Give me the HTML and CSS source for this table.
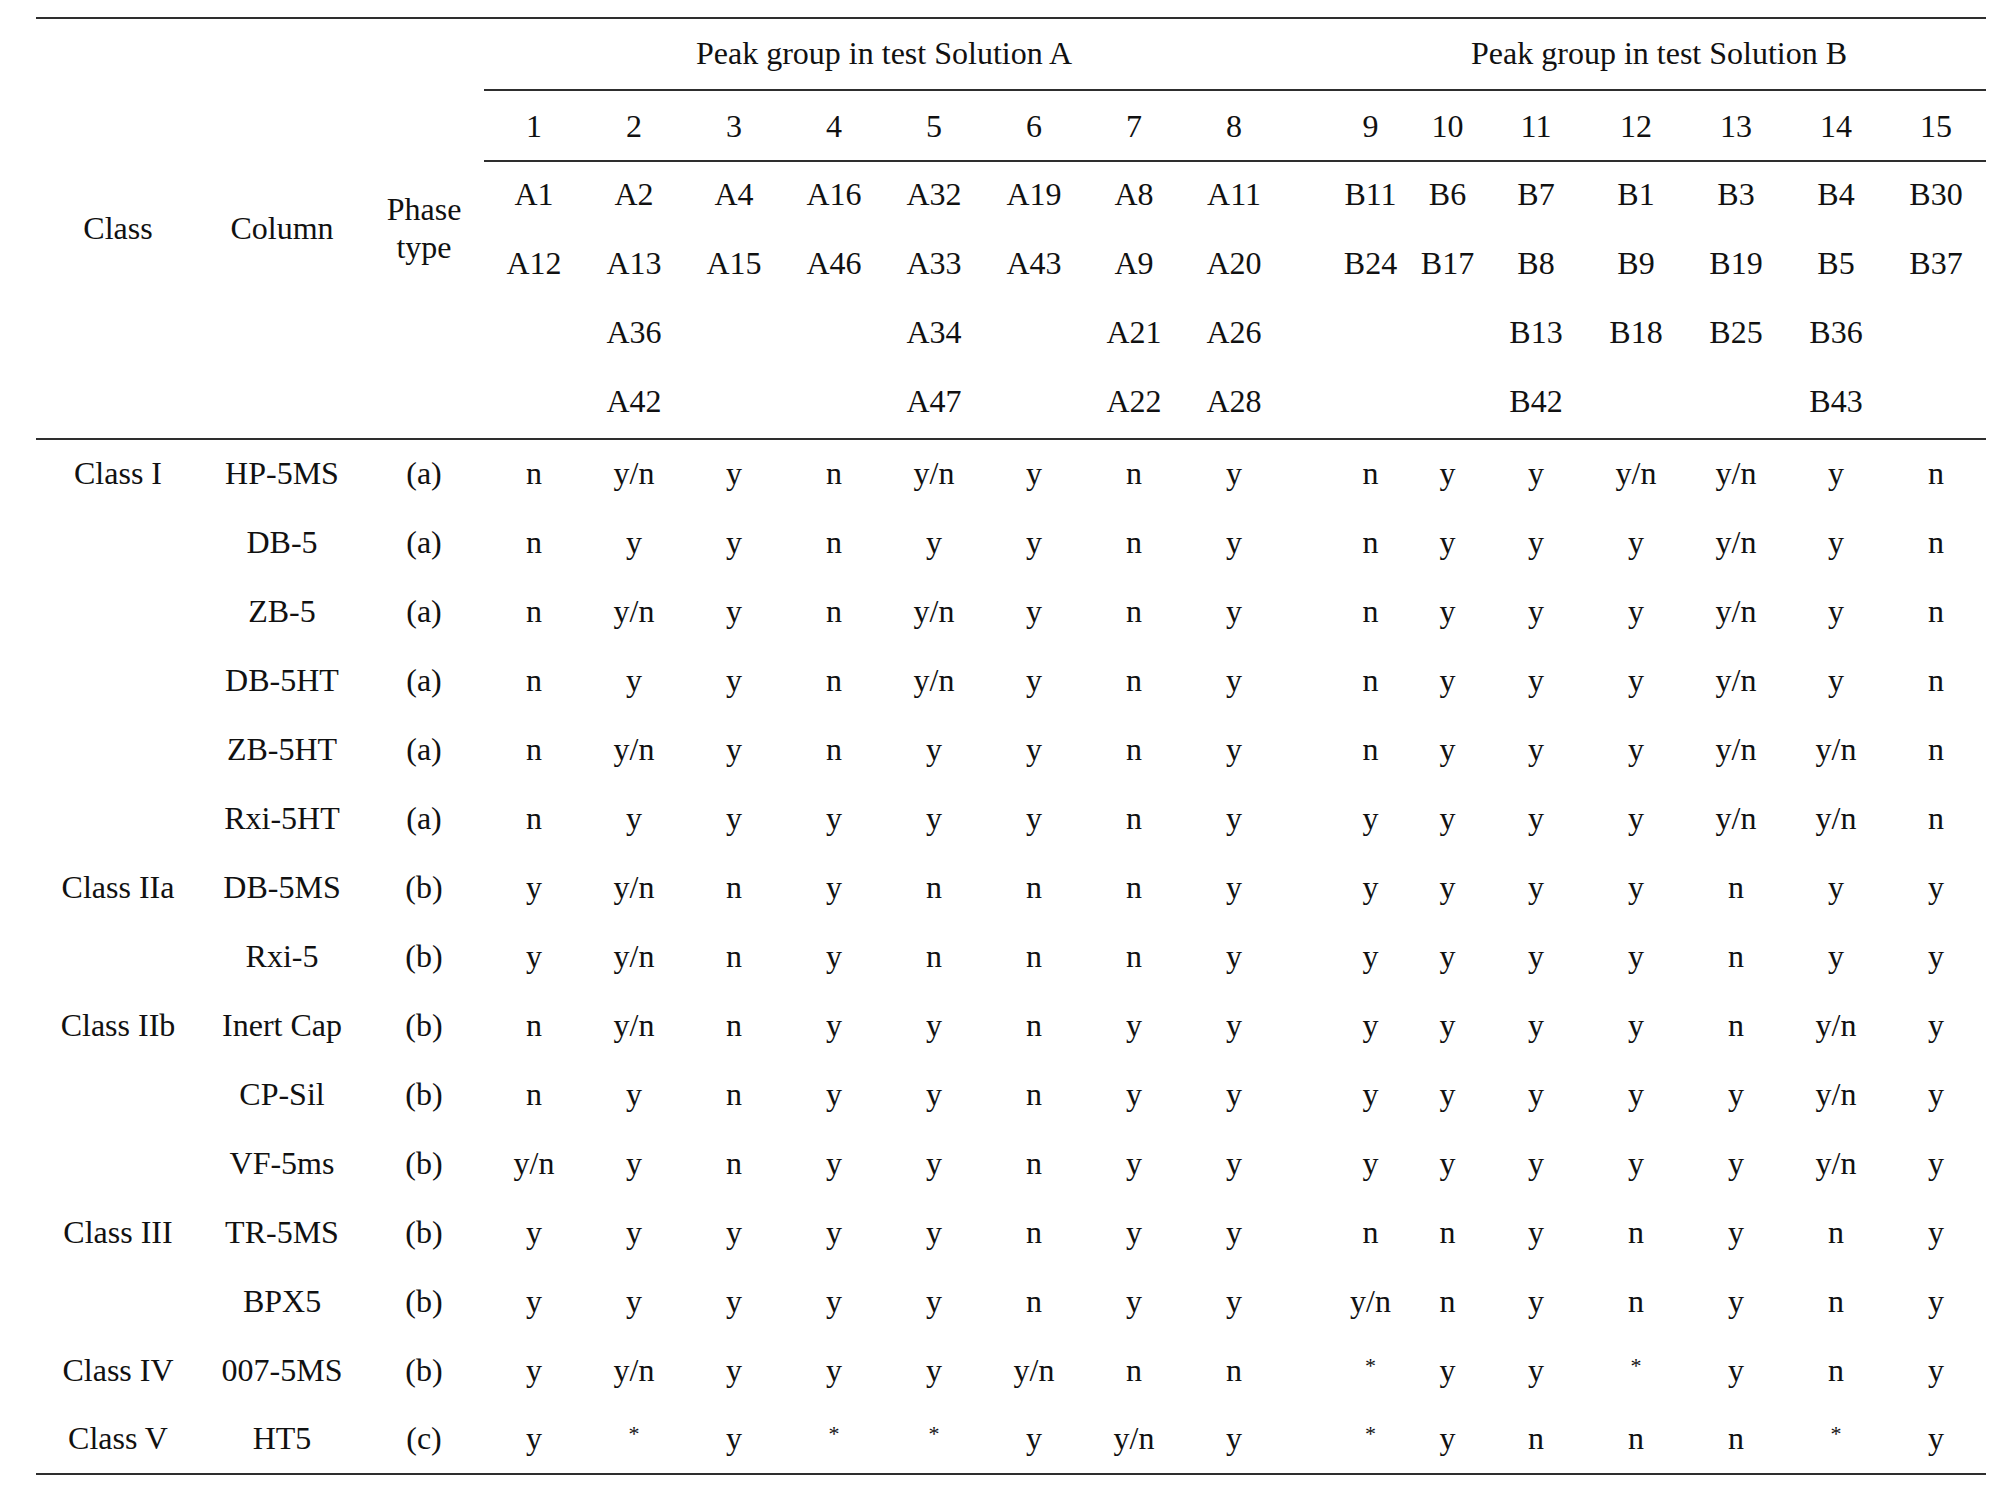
FILE: index.html
```html
<!DOCTYPE html>
<html>
<head>
<meta charset="utf-8">
<link rel="stylesheet" href="styles.css">
</head>
<body>
<table class="tbl">
<colgroup>
<col class="c-class"><col class="c-col"><col class="c-phase">
<col class="c-n"><col class="c-n"><col class="c-n"><col class="c-n"><col class="c-n"><col class="c-n"><col class="c-n"><col class="c-n">
<col class="c-sp"><col class="c-s"><col class="c-s">
<col class="c-n"><col class="c-n"><col class="c-n"><col class="c-n"><col class="c-n">
</colgroup>
<thead>
<tr class="r-grp">
<th rowspan="6" class="hdr">Class</th>
<th rowspan="6" class="hdr">Column</th>
<th rowspan="6" class="hdr">Phase<br>type</th>
<th colspan="8" class="grp">Peak group in test Solution A</th>
<th class="grp"></th>
<th colspan="7" class="grp">Peak group in test Solution B</th>
</tr>
<tr class="r-num">
<th>1</th><th>2</th><th>3</th><th>4</th><th>5</th><th>6</th><th>7</th><th>8</th><th></th><th>9</th><th>10</th><th>11</th><th>12</th><th>13</th><th>14</th><th>15</th>
</tr>
<tr class="r-sub">
<td>A1</td><td>A2</td><td>A4</td><td>A16</td><td>A32</td><td>A19</td><td>A8</td><td>A11</td><td></td><td>B11</td><td>B6</td><td>B7</td><td>B1</td><td>B3</td><td>B4</td><td>B30</td>
</tr>
<tr class="r-sub">
<td>A12</td><td>A13</td><td>A15</td><td>A46</td><td>A33</td><td>A43</td><td>A9</td><td>A20</td><td></td><td>B24</td><td>B17</td><td>B8</td><td>B9</td><td>B19</td><td>B5</td><td>B37</td>
</tr>
<tr class="r-sub">
<td></td><td>A36</td><td></td><td></td><td>A34</td><td></td><td>A21</td><td>A26</td><td></td><td></td><td></td><td>B13</td><td>B18</td><td>B25</td><td>B36</td><td></td>
</tr>
<tr class="r-sub r-last">
<td></td><td>A42</td><td></td><td></td><td>A47</td><td></td><td>A22</td><td>A28</td><td></td><td></td><td></td><td>B42</td><td></td><td></td><td>B43</td><td></td>
</tr>
</thead>
<tbody>
<tr><td>Class I</td><td>HP-5MS</td><td>(a)</td><td>n</td><td>y/n</td><td>y</td><td>n</td><td>y/n</td><td>y</td><td>n</td><td>y</td><td></td><td>n</td><td>y</td><td>y</td><td>y/n</td><td>y/n</td><td>y</td><td>n</td></tr>
<tr><td></td><td>DB-5</td><td>(a)</td><td>n</td><td>y</td><td>y</td><td>n</td><td>y</td><td>y</td><td>n</td><td>y</td><td></td><td>n</td><td>y</td><td>y</td><td>y</td><td>y/n</td><td>y</td><td>n</td></tr>
<tr><td></td><td>ZB-5</td><td>(a)</td><td>n</td><td>y/n</td><td>y</td><td>n</td><td>y/n</td><td>y</td><td>n</td><td>y</td><td></td><td>n</td><td>y</td><td>y</td><td>y</td><td>y/n</td><td>y</td><td>n</td></tr>
<tr><td></td><td>DB-5HT</td><td>(a)</td><td>n</td><td>y</td><td>y</td><td>n</td><td>y/n</td><td>y</td><td>n</td><td>y</td><td></td><td>n</td><td>y</td><td>y</td><td>y</td><td>y/n</td><td>y</td><td>n</td></tr>
<tr><td></td><td>ZB-5HT</td><td>(a)</td><td>n</td><td>y/n</td><td>y</td><td>n</td><td>y</td><td>y</td><td>n</td><td>y</td><td></td><td>n</td><td>y</td><td>y</td><td>y</td><td>y/n</td><td>y/n</td><td>n</td></tr>
<tr><td></td><td>Rxi-5HT</td><td>(a)</td><td>n</td><td>y</td><td>y</td><td>y</td><td>y</td><td>y</td><td>n</td><td>y</td><td></td><td>y</td><td>y</td><td>y</td><td>y</td><td>y/n</td><td>y/n</td><td>n</td></tr>
<tr><td>Class IIa</td><td>DB-5MS</td><td>(b)</td><td>y</td><td>y/n</td><td>n</td><td>y</td><td>n</td><td>n</td><td>n</td><td>y</td><td></td><td>y</td><td>y</td><td>y</td><td>y</td><td>n</td><td>y</td><td>y</td></tr>
<tr><td></td><td>Rxi-5</td><td>(b)</td><td>y</td><td>y/n</td><td>n</td><td>y</td><td>n</td><td>n</td><td>n</td><td>y</td><td></td><td>y</td><td>y</td><td>y</td><td>y</td><td>n</td><td>y</td><td>y</td></tr>
<tr><td>Class IIb</td><td>Inert Cap</td><td>(b)</td><td>n</td><td>y/n</td><td>n</td><td>y</td><td>y</td><td>n</td><td>y</td><td>y</td><td></td><td>y</td><td>y</td><td>y</td><td>y</td><td>n</td><td>y/n</td><td>y</td></tr>
<tr><td></td><td>CP-Sil</td><td>(b)</td><td>n</td><td>y</td><td>n</td><td>y</td><td>y</td><td>n</td><td>y</td><td>y</td><td></td><td>y</td><td>y</td><td>y</td><td>y</td><td>y</td><td>y/n</td><td>y</td></tr>
<tr><td></td><td>VF-5ms</td><td>(b)</td><td>y/n</td><td>y</td><td>n</td><td>y</td><td>y</td><td>n</td><td>y</td><td>y</td><td></td><td>y</td><td>y</td><td>y</td><td>y</td><td>y</td><td>y/n</td><td>y</td></tr>
<tr><td>Class III</td><td>TR-5MS</td><td>(b)</td><td>y</td><td>y</td><td>y</td><td>y</td><td>y</td><td>n</td><td>y</td><td>y</td><td></td><td>n</td><td>n</td><td>y</td><td>n</td><td>y</td><td>n</td><td>y</td></tr>
<tr><td></td><td>BPX5</td><td>(b)</td><td>y</td><td>y</td><td>y</td><td>y</td><td>y</td><td>n</td><td>y</td><td>y</td><td></td><td>y/n</td><td>n</td><td>y</td><td>n</td><td>y</td><td>n</td><td>y</td></tr>
<tr><td>Class IV</td><td>007-5MS</td><td>(b)</td><td>y</td><td>y/n</td><td>y</td><td>y</td><td>y</td><td>y/n</td><td>n</td><td>n</td><td></td><td><span class="ast">*</span></td><td>y</td><td>y</td><td><span class="ast">*</span></td><td>y</td><td>n</td><td>y</td></tr>
<tr><td>Class V</td><td>HT5</td><td>(c)</td><td>y</td><td><span class="ast">*</span></td><td>y</td><td><span class="ast">*</span></td><td><span class="ast">*</span></td><td>y</td><td>y/n</td><td>y</td><td></td><td><span class="ast">*</span></td><td>y</td><td>n</td><td>n</td><td>n</td><td><span class="ast">*</span></td><td>y</td></tr>
</tbody>
</table>
</body>
</html>
```
FILE: styles.css
```css
html, body {
  margin: 0;
  padding: 0;
  background: #ffffff;
}

body {
  padding: 17px 0 0 36px;
  font-family: "Liberation Serif", "Times New Roman", serif;
  color: #111111;
}

.tbl {
  width: 1950px;
  table-layout: fixed;
  border-collapse: collapse;
  border-top: 2px solid #2e2e2e;
  border-bottom: 2px solid #2e2e2e;
  font-size: 32px;
}

.c-class { width: 164px; }
.c-col { width: 164px; }
.c-phase { width: 120px; }
.c-n { width: 100px; }
.c-sp { width: 48px; }
.c-s { width: 77px; }

.tbl th,
.tbl td {
  padding: 0;
  text-align: center;
  vertical-align: middle;
  font-weight: normal;
  white-space: nowrap;
  line-height: 38px;
}

.tbl .hdr {
  border-bottom: 2px solid #2e2e2e;
}

.tbl .r-grp th {
  height: 68px;
  padding-bottom: 2px;
}

.tbl .grp {
  border-bottom: 2px solid #2e2e2e;
}

.tbl .r-num th {
  height: 69px;
  border-bottom: 2px solid #2e2e2e;
}

.tbl .r-sub td {
  height: 63px;
  padding-bottom: 6px;
}

.tbl .r-last td {
  border-bottom: 2px solid #2e2e2e;
}

.tbl tbody td {
  height: 66px;
  padding-bottom: 3px;
}

.tbl tbody tr:last-child td {
  height: 64px;
}

.ast {
  font-size: 22px;
  vertical-align: 12px;
}
```
